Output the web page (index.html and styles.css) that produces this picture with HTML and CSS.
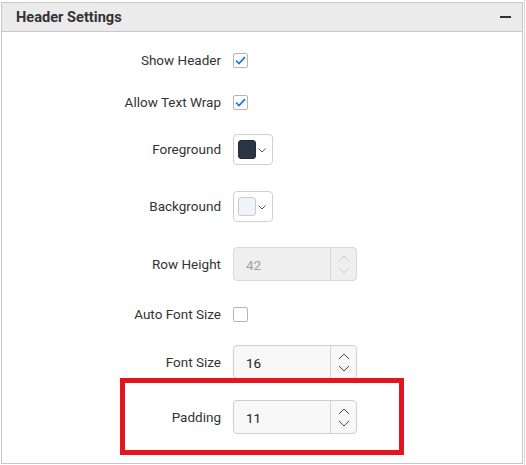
FILE: index.html
```html
<!DOCTYPE html>
<html>
<head>
  <meta charset="utf-8">
  <title>Header Settings</title>
  <link rel="stylesheet" href="styles.css">
</head>
<body>
  <div class="edge"></div>
  <div class="panel">
    <div class="panel-header">
      <span class="panel-title">Header Settings</span>
      <span class="collapse"></span>
    </div>

    <div class="panel-body">
      <div class="row r1">
        <label class="label">Show Header</label>
        <span class="check checked">
          <svg width="11" height="9" viewBox="0 0 11 9"><path d="M1 4.5 L4 7.5 L10 1.2" fill="none" stroke="#1a73d9" stroke-width="1.7"/></svg>
        </span>
      </div>

      <div class="row r2">
        <label class="label">Allow Text Wrap</label>
        <span class="check checked">
          <svg width="11" height="9" viewBox="0 0 11 9"><path d="M1 4.5 L4 7.5 L10 1.2" fill="none" stroke="#1a73d9" stroke-width="1.7"/></svg>
        </span>
      </div>

      <div class="row r3">
        <label class="label">Foreground</label>
        <div class="color-pick">
          <span class="swatch dark"></span>
          <svg class="caret" width="8" height="5" viewBox="0 0 8 5"><path d="M0.5 0.5 L4 4 L7.5 0.5" fill="none" stroke="#555" stroke-width="1"/></svg>
        </div>
      </div>

      <div class="row r4">
        <label class="label">Background</label>
        <div class="color-pick">
          <span class="swatch light"></span>
          <svg class="caret" width="8" height="5" viewBox="0 0 8 5"><path d="M0.5 0.5 L4 4 L7.5 0.5" fill="none" stroke="#555" stroke-width="1"/></svg>
        </div>
      </div>

      <div class="row r5">
        <label class="label">Row Height</label>
        <div class="numeric disabled">
          <span class="value">42</span>
          <span class="spin">
            <svg width="12" height="7" viewBox="0 0 12 7"><path d="M1 6 L6 1 L11 6" fill="none" stroke="#ccc" stroke-width="1"/></svg>
            <svg width="12" height="7" viewBox="0 0 12 7"><path d="M1 1 L6 6 L11 1" fill="none" stroke="#ccc" stroke-width="1"/></svg>
          </span>
        </div>
      </div>

      <div class="row r6">
        <label class="label">Auto Font Size</label>
        <span class="check"></span>
      </div>

      <div class="row r7">
        <label class="label">Font Size</label>
        <div class="numeric">
          <span class="value">16</span>
          <span class="spin">
            <svg width="12" height="7" viewBox="0 0 12 7"><path d="M1 6 L6 1 L11 6" fill="none" stroke="#444" stroke-width="1"/></svg>
            <svg width="12" height="7" viewBox="0 0 12 7"><path d="M1 1 L6 6 L11 1" fill="none" stroke="#444" stroke-width="1"/></svg>
          </span>
        </div>
      </div>

      <div class="row r8">
        <label class="label">Padding</label>
        <div class="numeric">
          <span class="value">11</span>
          <span class="spin">
            <svg width="12" height="7" viewBox="0 0 12 7"><path d="M1 6 L6 1 L11 6" fill="none" stroke="#444" stroke-width="1"/></svg>
            <svg width="12" height="7" viewBox="0 0 12 7"><path d="M1 1 L6 6 L11 1" fill="none" stroke="#444" stroke-width="1"/></svg>
          </span>
        </div>
      </div>
    </div>

    <div class="highlight"></div>
  </div>
</body>
</html>
```

FILE: styles.css
```css
body {
  margin: 0;
  background-color: #fff;
  font-family: Roboto, 'Liberation Sans', Arial, sans-serif;
  font-size: 13px;
  color: #333;
  position: relative;
  width: 526px;
  height: 465px;
  overflow: hidden;
}
.edge {
  position: absolute;
  left: 524px;
  top: 0;
  width: 1px;
  height: 465px;
  background-color: #d6d6d6;
}
.panel {
  position: relative;
  margin: 2px 0 0 1px;
  width: 520px;
  height: 460px;
  border: 1px solid #c8c8c8;
  background-color: #fff;
}
.panel-header {
  display: flex;
  align-items: center;
  justify-content: space-between;
  height: 28px;
  padding: 0 11px 0 14px;
  background-color: #ebebeb;
  border-bottom: 1px solid #c8c8c8;
}
.panel-title {
  font-size: 14.6px;
  font-weight: bold;
  color: #333;
}
.collapse {
  width: 11px;
  height: 2px;
  background-color: #333;
}
.panel-body {
  padding-top: 7px;
}
.row {
  display: flex;
  align-items: center;
}
.r1 { height: 42px; }
.r2 { height: 42px; }
.r3 { height: 52px; }
.r4 { height: 62px; }
.r5 { height: 54px; }
.r6 { height: 46px; }
.r7 { height: 50px; }
.r8 { height: 60px; }
.label {
  width: 219px;
  text-align: right;
  margin-right: 12px;
  font-size: 13.5px;
  color: #333;
}
.check {
  display: flex;
  align-items: center;
  justify-content: center;
  width: 13px;
  height: 13px;
  border: 1px solid #b5b5b5;
  border-radius: 2px;
  background-color: #fff;
}
.color-pick {
  display: flex;
  align-items: center;
  width: 38px;
  height: 29px;
  border: 1px solid #cfcfcf;
  border-radius: 4px;
  background-color: #fff;
}
.swatch {
  width: 18px;
  height: 19px;
  margin-left: 4px;
  border-radius: 3px;
  box-sizing: border-box;
}
.swatch.dark {
  background-color: #2c3446;
  border: 1px solid #232a39;
}
.swatch.light {
  background-color: #f1f4f8;
  border: 1px solid #c9ccd0;
}
.caret {
  margin-left: 2px;
  margin-top: 3px;
}
.numeric {
  display: flex;
  width: 122px;
  height: 32px;
  border: 1px solid #cfcfcf;
  border-radius: 4px;
  background-color: #f8f8f8;
}
.numeric .value {
  flex: 1;
  display: flex;
  align-items: center;
  padding-left: 12px;
  padding-top: 2px;
  font-size: 13.5px;
  color: #222;
}
.numeric .spin {
  width: 25px;
  display: flex;
  flex-direction: column;
  align-items: center;
  justify-content: center;
  gap: 5px;
  border-left: 1px solid #d6d6d6;
}
.numeric.disabled {
  background-color: #efefef;
  border-color: #d8d8d8;
}
.numeric.disabled .value {
  color: #a0a0a0;
}
.highlight {
  position: absolute;
  left: 118px;
  top: 375px;
  width: 274px;
  height: 67px;
  border: 5px solid #e3161f;
}
```
